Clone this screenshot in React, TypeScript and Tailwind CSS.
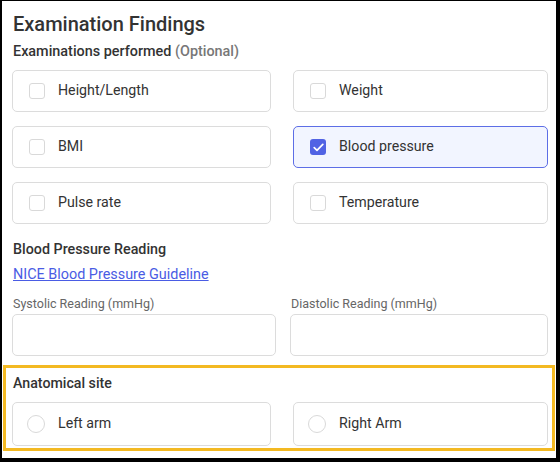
import React from 'react';

const FONT = { fontFamily: 'Roboto, "Liberation Sans", sans-serif' };

const exams = [
  { id: 'height', label: 'Height/Length', checked: false },
  { id: 'weight', label: 'Weight', checked: false },
  { id: 'bmi', label: 'BMI', checked: false },
  { id: 'bp', label: 'Blood pressure', checked: true },
  { id: 'pulse', label: 'Pulse rate', checked: false },
  { id: 'temp', label: 'Temperature', checked: false },
];

const CheckCard: React.FC<{ label: string; checked: boolean }> = ({ label, checked }) => (
  <div
    className={`h-[42px] flex items-center pl-[16px] gap-[13px] rounded-[5px] border ${
      checked ? 'border-[#5d6ee6] bg-[#f2f5ff]' : 'border-[#dcdcdc] bg-white'
    }`}
  >
    {checked ? (
      <span className="w-[16px] h-[16px] rounded-[3px] bg-[#5163e4] flex items-center justify-center">
        <svg width="11" height="9" viewBox="0 0 11 9" fill="none">
          <path d="M1.2 4.6 L4 7.3 L9.8 1.4" stroke="white" strokeWidth="1.7" strokeLinecap="round" strokeLinejoin="round" />
        </svg>
      </span>
    ) : (
      <span className="w-[16px] h-[16px] rounded-[3px] border border-[#d9d9d9] bg-white" />
    )}
    <span className="text-[14.2px] text-[#333]">{label}</span>
  </div>
);

const RadioCard: React.FC<{ label: string }> = ({ label }) => (
  <div className="h-[44px] flex items-center pl-[14px] gap-[13px] rounded-[5px] border border-[#dcdcdc] bg-white">
    <span className="w-[18px] h-[18px] rounded-full border border-[#d9d9d9] bg-white" />
    <span className="text-[14.2px] text-[#333]">{label}</span>
  </div>
);

export default function App() {
  return (
    <div
      style={FONT}
      className="relative w-[560px] h-[462px] bg-white border-t border-l-2 border-r-4 border-b-4 border-black overflow-hidden"
    >
      <div className="pl-[10px] pt-[9px]">
        <h1 className="pl-px text-[20px] leading-7 font-medium text-[#333]">Examination Findings</h1>
        <p className="pl-px mt-[4px] text-[14.4px] leading-5 font-medium text-[#333]">
          Examinations performed <span className="text-[#777]">(Optional)</span>
        </p>

        <div className="mt-[8px] grid grid-cols-[259px_255px] gap-x-[22px] gap-y-[14px]">
          {exams.map((e) => (
            <CheckCard key={e.id} label={e.label} checked={e.checked} />
          ))}
        </div>

        <p className="pl-px mt-[15px] text-[14.3px] leading-5 font-medium text-[#333]">Blood Pressure Reading</p>
        <a href="#" className="pl-px block mt-[6px] text-[14.4px] leading-5 text-[#4a5ce4] underline">
          NICE Blood Pressure Guideline
        </a>

        <div className="mt-[9px] grid grid-cols-[264px_258px] gap-x-[14px]">
          <div>
            <label className="pl-px block text-[12.5px] leading-5 text-[#666]">Systolic Reading (mmHg)</label>
            <input className="w-full h-[42px] rounded-[5px] border border-[#dcdcdc] bg-white outline-none" />
          </div>
          <div>
            <label className="pl-px block text-[12.5px] leading-5 text-[#666]">Diastolic Reading (mmHg)</label>
            <input className="w-full h-[42px] rounded-[5px] border border-[#dcdcdc] bg-white outline-none" />
          </div>
        </div>

        <p className="pl-px mt-[17px] text-[14.2px] leading-5 font-medium text-[#333]">Anatomical site</p>
        <div className="mt-[9px] grid grid-cols-[259px_255px] gap-x-[22px]">
          <RadioCard label="Left arm" />
          <RadioCard label="Right Arm" />
        </div>
      </div>

      <div className="absolute left-[1px] top-[364px] w-[552px] h-[86px] border-[3px] border-[#f3b922] pointer-events-none" />
    </div>
  );
}
